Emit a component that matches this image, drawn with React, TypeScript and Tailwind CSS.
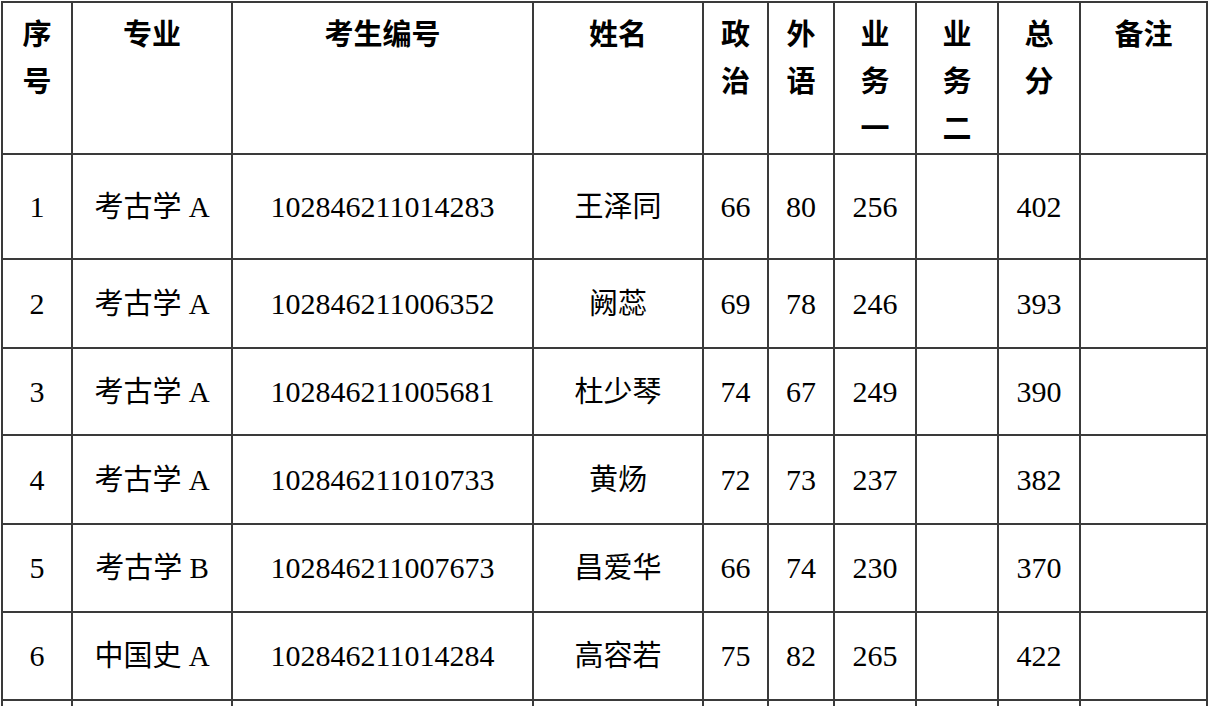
import React from "react";

const colClasses = [
  "w-[70px]",
  "w-[160px]",
  "w-[301px]",
  "w-[170px]",
  "w-[65px]",
  "w-[66px]",
  "w-[82px]",
  "w-[82px]",
  "w-[82px]",
  "w-[127px]",
];

const headers: string[][] = [
  ["序", "号"],
  ["专业"],
  ["考生编号"],
  ["姓名"],
  ["政", "治"],
  ["外", "语"],
  ["业", "务", "一"],
  ["业", "务", "二"],
  ["总", "分"],
  ["备注"],
];

const cellSize = [
  "text-[30px]",
  "text-[29px]",
  "text-[30px]",
  "text-[29px]",
  "text-[30px]",
  "text-[30px]",
  "text-[30px]",
  "text-[30px]",
  "text-[30px]",
  "text-[30px]",
];

const rows: { h: string; c: string[] }[] = [
  { h: "h-[105px]", c: ["1", "考古学 A", "102846211014283", "王泽同", "66", "80", "256", "", "402", ""] },
  { h: "h-[89px]", c: ["2", "考古学 A", "102846211006352", "阙蕊", "69", "78", "246", "", "393", ""] },
  { h: "h-[87px]", c: ["3", "考古学 A", "102846211005681", "杜少琴", "74", "67", "249", "", "390", ""] },
  { h: "h-[89px]", c: ["4", "考古学 A", "102846211010733", "黄炀", "72", "73", "237", "", "382", ""] },
  { h: "h-[88px]", c: ["5", "考古学 B", "102846211007673", "昌爱华", "66", "74", "230", "", "370", ""] },
  { h: "h-[88px]", c: ["6", "中国史 A", "102846211014284", "高容若", "75", "82", "265", "", "422", ""] },
  { h: "h-[88px]", c: ["", "", "", "", "", "", "", "", "", ""] },
];

export default function App() {
  return (
    <div className="bg-white min-h-screen pl-[1px] pt-[1px] text-black font-['Liberation_Serif','Noto_Sans_CJK_SC',serif]">
      <table className="table-fixed border-collapse w-[1205px]">
        <colgroup>
          {colClasses.map((c, i) => (
            <col key={i} className={c} />
          ))}
        </colgroup>
        <thead>
          <tr className="h-[150px]">
            {headers.map((lines, i) => (
              <th
                key={i}
                className="border-2 border-[#3a3a3a] align-top pt-[9px] pb-0 px-0 text-[29px] leading-[47px] font-bold text-center"
              >
                {lines.map((l, j) => (
                  <div key={j}>{l}</div>
                ))}
              </th>
            ))}
          </tr>
        </thead>
        <tbody>
          {rows.map((r, i) => (
            <tr key={i} className={r.h}>
              {r.c.map((t, j) => (
                <td
                  key={j}
                  className={`border-2 border-[#3a3a3a] align-middle text-center leading-[34px] p-0 whitespace-nowrap ${cellSize[j]}`}
                >
                  {t}
                </td>
              ))}
            </tr>
          ))}
        </tbody>
      </table>
    </div>
  );
}
